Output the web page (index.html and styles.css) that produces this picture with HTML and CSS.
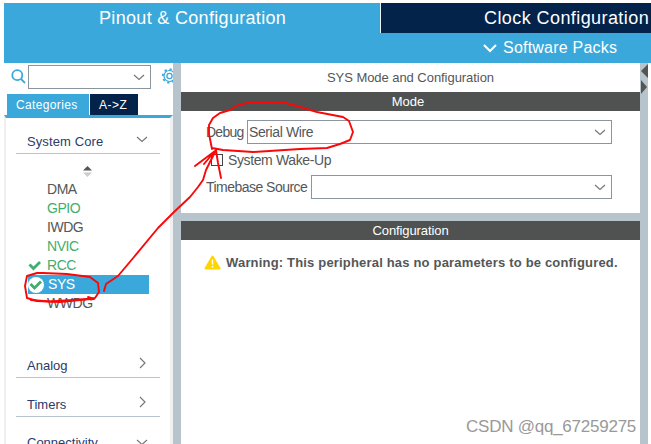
FILE: index.html
```html
<!DOCTYPE html>
<html lang="en">
<head>
<meta charset="utf-8">
<title>Pinout &amp; Configuration</title>
<link rel="stylesheet" href="styles.css">
</head>
<body>
<div class="app">
  <header class="header">
    <nav class="tabs">
      <div class="tab tab-active"><span>Pinout &amp; Configuration</span></div>
      <div class="tab tab-clock"><span>Clock Configuration</span></div>
    </nav>
    <div class="packs">
      <svg width="14" height="10" viewBox="0 0 14 10"><path d="M1 2l6 6 6-6" fill="none" stroke="#fff" stroke-width="2"/></svg>
      <span>Software Packs</span>
    </div>
  </header>
  <div class="workspace">
    <aside class="sidebar">
      <div class="search">
        <svg class="lens" width="15" height="15" viewBox="0 0 15 15"><g fill="none" stroke="#3ba8dc" stroke-width="1.8"><circle cx="6.3" cy="6.2" r="5"/><path d="M10 10l4 4"/></g></svg>
        <div class="combo search-combo"><svg class="chev" width="12" height="7" viewBox="0 0 12 7"><path d="M1 1l5 4.5L11 1"/></svg></div>
        <svg class="gear" width="12" height="16" viewBox="0 0 12 16"><g fill="none" stroke="#3ba8dc"><circle cx="8.5" cy="8" r="6.7" stroke-width="1.8" stroke-dasharray="2.4 2.81"/><circle cx="8.5" cy="8" r="5.5" stroke-width="1.2"/><circle cx="8.5" cy="8" r="2.6" stroke-width="1.3"/></g></svg>
      </div>
      <div class="filters"><div class="filter filter-cat"><span>Categories</span></div><div class="filter filter-az"><span>A-&gt;Z</span></div></div>
      <div class="tree">
        <div class="group group-core"><span>System Core</span><svg class="chev" width="12" height="7" viewBox="0 0 12 7"><path d="M1 1l5 4.5L11 1"/></svg></div>
        <div class="sorter"><svg width="9" height="11" viewBox="0 0 9 11"><path d="M0 4.5L4.5 0 9 4.5z" fill="#555"/><path d="M0 6.5h9L4.5 11z" fill="#ccc"/></svg></div>
        <ul class="items">
          <li><i></i><span>DMA</span></li>
          <li class="on"><i></i><span>GPIO</span></li>
          <li><i></i><span>IWDG</span></li>
          <li class="on"><i></i><span>NVIC</span></li>
          <li class="on"><i><svg width="14" height="14" viewBox="0 0 14 14"><path d="M1.5 5.5l4 4 6.5-6.5" fill="none" stroke="#3fae6e" stroke-width="2.8"/></svg></i><span>RCC</span></li>
          <li class="selected"><i><svg width="16" height="16" viewBox="0 0 16 16"><circle cx="8" cy="8" r="8" fill="#fff"/><path d="M2.5 7l4 4 6.5-6.5" fill="none" stroke="#3fae6e" stroke-width="2.8"/></svg></i><span>SYS</span></li>
          <li><i></i><span>WWDG</span></li>
        </ul>
        <div class="group group-analog"><span>Analog</span><svg class="chev right" width="7" height="12" viewBox="0 0 7 12"><path d="M1 1l5 5-5 5"/></svg></div>
        <div class="group group-timers"><span>Timers</span><svg class="chev right" width="7" height="12" viewBox="0 0 7 12"><path d="M1 1l5 5-5 5"/></svg></div>
        <div class="group group-conn"><span>Connectivity</span><svg class="chev" width="12" height="7" viewBox="0 0 12 7"><path d="M1 1l5 4.5L11 1"/></svg></div>
      </div>
    </aside>
    <div class="divider"></div>
    <main class="main">
      <section class="mode">
        <h1><span>SYS Mode and Configuration</span></h1>
        <h2><span>Mode</span></h2>
        <div class="form">
          <div class="field"><label class="l-debug">Debug</label><div class="combo"><span class="value">Serial Wire</span><svg class="chev" width="12" height="7" viewBox="0 0 12 7"><path d="M1 1l5 4.5L11 1"/></svg></div></div>
          <div class="check"><div class="box"></div><span>System Wake-Up</span></div>
          <div class="field"><label class="l-time">Timebase Source</label><div class="combo"><svg class="chev" width="12" height="7" viewBox="0 0 12 7"><path d="M1 1l5 4.5L11 1"/></svg></div></div>
        </div>
      </section>
      <section class="config">
        <h2><span>Configuration</span></h2>
        <div class="warning">
          <svg width="17" height="15" viewBox="0 0 17 15"><path d="M8.5 1.5L15.5 13.5h-14z" fill="#ffd500" stroke="#ffd500" stroke-width="2" stroke-linejoin="round"/><path d="M8.5 4.5v5M8.5 11v1.6" stroke="#fff" stroke-width="1.5"/></svg>
          <span>Warning: This peripheral has no parameters to be configured.</span>
        </div>
      </section>
    </main>
    <div class="rail"><svg width="8" height="32" viewBox="0 0 8 32"><path d="M8 1v14L1 8z M1 17v14l6-7z" fill="#555"/></svg></div>
  </div>
  <svg class="ink" width="651" height="444" viewBox="0 0 651 444">
    <g fill="none" stroke="#f80808" stroke-width="1.9" stroke-linecap="round" stroke-linejoin="round">
      <path d="M212 149L209 134V125L213 118L220 113L230 110L238 105L247 103L257 102H282L297 106L317 112L343 117L349 121L353 132L350 140L340 144L327 148L300 149L253 152L223 150L212 148"/>
      <path d="M104 291L106 284L118 276L134 257L158 228L174 212L190 197L198 187L203 180L206 170L216 150M195 166L215 151L204 164M216 150L218 163L221 178"/>
      <path d="M37 273L27 276L25 286L27 298L37 301L60 302L80 300L95 298L99 292L98 283L90 277L67 274L43 273Z"/>
      <path d="M31 300L50 301.5L80 299.5L94 299L88 297"/>
    </g>
  </svg>
  <div class="watermark">CSDN @qq_67259275</div>
</div>
</body>
</html>
```
FILE: styles.css
```css
* { box-sizing: border-box; }
body { margin: 0; background: #fff; font: 14px "Liberation Sans", Arial, sans-serif; color: #545758; }
svg { display: block; flex: none; }
h1, h2, ul { margin: 0; padding: 0; font-size: inherit; font-weight: normal; list-style: none; }
.app { position: relative; width: 651px; height: 444px; overflow: hidden; padding: 3px 0 0 4px; display: flex; flex-direction: column; white-space: nowrap; }
.header { height: 60px; flex: none; background: #3ba8dc; color: #fff; }
.tabs { display: flex; height: 30px; line-height: 31px; font-size: 18px; }
.tab-active { width: 377px; padding-left: 95px; border-right: 1px solid #e8f3f8; letter-spacing: .32px; }
.tab-clock { flex: 1; padding-left: 103px; background: #03234b; letter-spacing: .42px; }
.packs { height: 30px; display: flex; align-items: center; gap: 6px; padding-left: 479px; font-size: 16px; letter-spacing: .22px; }
.workspace { flex: 1; display: flex; min-height: 0; }
.sidebar { width: 169px; flex: none; display: flex; flex-direction: column; overflow: hidden; }
.search { display: flex; height: 31px; padding: 2px 0 0 7px; flex: none; }
.lens { margin-top: 4px; }
.combo { flex: 1; height: 24px; border: 1px solid #8b959d; display: flex; align-items: center; padding: 0 5px 0 1px; letter-spacing: -.4px; }
.search-combo { flex: 0 0 123px; margin: 0 10px 0 2px; }
.combo .chev { margin-left: auto; }
.chev path { fill: none; stroke: #777; stroke-width: 1.2; }
.gear { margin-top: 3px; }
.filters { display: flex; gap: 1px; height: 21px; flex: none; padding-left: 3px; color: #fff; line-height: 22px; font-size: 12px; }
.filter-cat { width: 82px; background: #3ba8dc; padding-left: 9px; letter-spacing: .35px; }
.filter-az { width: 48px; background: #03234b; padding-left: 9px; letter-spacing: .5px; }
.tree { flex: 1; width: 169px; border: solid #f0f0f0; border-width: 0 3px 0 2px; padding: 0 10px 0 10px; border-top: 3px solid #3ba8dc; min-height: 0; }
.group { display: flex; justify-content: space-between; align-items: center; width: 144px; height: 39px; padding: 15px 12px 0 11px; border-bottom: 1px solid #b8c4cb; color: #2b3a68; font-size: 13px; }
.group-core { height: 36px; padding-top: 11px; letter-spacing: .1px; }
.group-core .chev { position: relative; top: -2px; }
.group-conn { padding-top: 13px; }
.group .right { margin-right: 2px; position: relative; top: -3px; }
.sorter { height: 26px; padding: 12px 0 0 67px; }
.items li { display: flex; align-items: center; width: 121px; height: 19px; margin-left: 12px; font-size: 14px; line-height: 19px; letter-spacing: -.45px; }
.items span { height: 19px; line-height: 18px; }
.items i { width: 19px; flex: none; }
.items .on { color: #3fae6e; }
.items .selected { background: #3ba8dc; color: #fff; }
.items .selected i { width: 20px; }
.group-analog { margin-top: 26px; }
.divider { width: 8px; background: #b8c4cb; flex: none; }
.main { width: 459px; flex: none; display: flex; flex-direction: column; gap: 8px; background: #b8c4cb; }
.mode { height: 150px; background: #fff; flex: none; }
h1 { height: 29px; line-height: 29px; text-align: center; font-size: 13px; letter-spacing: -.05px; }
h2 { height: 19px; line-height: 19px; text-align: center; background: #4f5250; color: #fff; font-size: 13px; letter-spacing: -.1px; }
.mode h2 { letter-spacing: 0; padding-right: 5px; }
.form { padding: 9px 28px 0 25px; }
.field { display: flex; align-items: center; height: 24px; }
.field label { flex: none; font-size: 14px; letter-spacing: -.53px; }
.field .l-debug { width: 41px; letter-spacing: -.75px; }
.l-time { width: 105px; }
.check { height: 31px; display: flex; align-items: center; gap: 5px; padding-left: 5px; letter-spacing: -.38px; }
.box { width: 12px; height: 12px; border: 1px solid #444; }
.config { flex: 1; background: #fff; }
.warning { display: flex; align-items: center; gap: 5px; padding: 15px 0 0 23px; font-weight: bold; font-size: 13px; letter-spacing: .18px; }
.rail { width: 8px; background: #b8c4cb; flex: none; }
.ink { position: absolute; left: 0; top: 0; }
.watermark { position: absolute; left: 466px; top: 417px; font-size: 17px; letter-spacing: -.24px; color: #999; }
```
